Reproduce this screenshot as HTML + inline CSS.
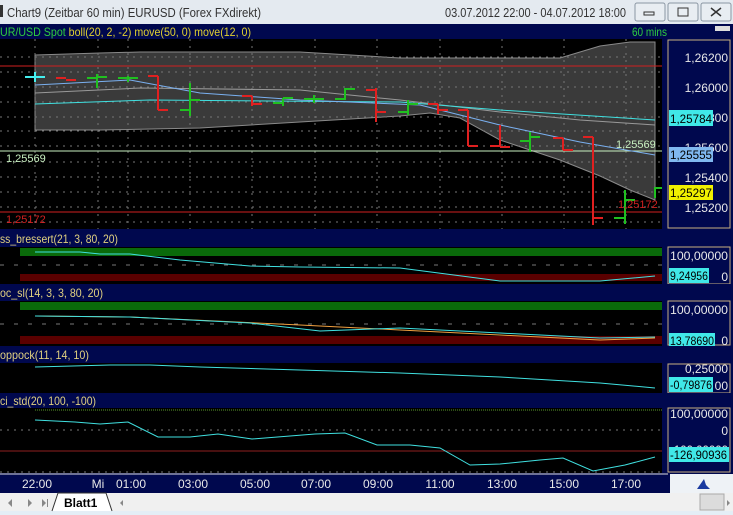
<!DOCTYPE html>
<html><head><meta charset="utf-8"><style>
body{margin:0;width:733px;height:515px;overflow:hidden;background:#000;font-family:"Liberation Sans",sans-serif}
svg{display:block}
text{font-family:"Liberation Sans",sans-serif}
</style></head><body>
<svg width="733" height="515" viewBox="0 0 733 515" xmlns="http://www.w3.org/2000/svg">
<rect x="0" y="0" width="733" height="24" fill="#e4eaf0"/>
<rect x="0" y="5" width="3" height="12" fill="#333"/>
<text x="7" y="17" font-size="13" fill="#333" textLength="254" lengthAdjust="spacingAndGlyphs">Chart9 (Zeitbar 60 min)  EURUSD (Forex FXdirekt)</text>
<text x="445" y="17" font-size="13" fill="#333" textLength="181" lengthAdjust="spacingAndGlyphs">03.07.2012 22:00 - 04.07.2012 18:00</text>
<g fill="#e8edf2" stroke="#8a96a3"><rect x="635" y="3" width="30" height="18" rx="2"/><rect x="668" y="3" width="30" height="18" rx="2"/><rect x="701" y="3" width="30" height="18" rx="2"/></g>
<rect x="644" y="12" width="10" height="3" fill="none" stroke="#333"/>
<rect x="678" y="8" width="10" height="8" fill="none" stroke="#333"/>
<path d="M711 8l10 8M721 8l-10 8" stroke="#333" stroke-width="1.5"/>
<rect x="0" y="24" width="733" height="15" fill="#00084e"/>
<text x="0" y="36" font-size="12" fill="#2ecc40" textLength="251" lengthAdjust="spacingAndGlyphs">UR/USD Spot <tspan fill="#e0d030">boll(20, 2, -2) move(50, 0) move(12, 0)</tspan></text>
<text x="632" y="36" font-size="12" fill="#2ecc40" textLength="35" lengthAdjust="spacingAndGlyphs">60 mins</text>
<rect x="715" y="26" width="15" height="5" fill="#ddd"/>
<rect x="0" y="39" width="662" height="190" fill="#000"/>
<path d="M35 55 L100 53 L140 52 L300 52 L400 58 L560 58 L600 46 L630 42 L655 42 L655 200 L630 190 L600 176 L560 160 L500 140 L460 118 L430 113 L400 116 L300 122 L200 128 L100 130 L35 130 Z" fill="#3a3a3a" stroke="#8a8a8a"/>
<g stroke="#777" stroke-dasharray="2,5" stroke-width="1">
<path d="M0 57H662M0 72H662M0 87H662M0 102H662M0 117H662M0 131H662M0 146H662M0 162H662M0 177H662M0 192H662M0 207H662M0 222H662"/>
<path d="M35 39V229M98 39V229M128 39V229M190 39V229M252 39V229M315 39V229M377 39V229M440 39V229M502 39V229M564 39V229M626 39V229"/>
</g>
<line x1="0" y1="66" x2="662" y2="66" stroke="#d02020"/>
<line x1="0" y1="151" x2="662" y2="151" stroke="#c8f0c0"/>
<line x1="0" y1="212" x2="662" y2="212" stroke="#d02020"/>
<polyline points="35,93 140,88 300,90 400,100 500,112 580,120 655,125" fill="none" stroke="#999"/>
<polyline points="35,104 150,100 400,102 500,110 655,120" fill="none" stroke="#40e0e0"/>
<polyline points="35,85 130,80 200,93 300,100 420,105 500,125 580,142 655,155" fill="none" stroke="#7ab0f0"/>
<g stroke-width="2" fill="none">
<path d="M25 77h20M35 72v10" stroke="#4ee"/>
<path d="M56 78h10M66 80h10" stroke="#e02020"/>
<path d="M87 78h10M97 74v14M97 77h10" stroke="#20c020"/>
<path d="M118 78h10M128 76v6M128 78h10" stroke="#20c020"/>
<path d="M148 76h10M158 76v34M158 110h10" stroke="#e02020"/>
<path d="M180 110h10M190 83v33M190 100h10" stroke="#20c020"/>
<path d="M242 96h10M252 96v10M252 104h10" stroke="#e02020"/>
<path d="M273 103h10M283 98v8M283 98h10" stroke="#20c020"/>
<path d="M304 99h10M314 95v8M314 99h10" stroke="#20c020"/>
<path d="M335 99h10M345 88v12M345 89h10" stroke="#20c020"/>
<path d="M366 90h10M376 88v34M376 112h10" stroke="#e02020"/>
<path d="M398 112h10M408 100v15M408 104h10" stroke="#20c020"/>
<path d="M428 104h10M438 104v10M438 110h10" stroke="#e02020"/>
<path d="M458 110h10M468 110v36M468 146h10" stroke="#e02020"/>
<path d="M490 146h10M500 125v22M500 147h10" stroke="#e02020"/>
<path d="M520 141h10M530 132v20M530 137h10" stroke="#20c020"/>
<path d="M553 138h10M563 138v12M563 150h10" stroke="#e02020"/>
<path d="M583 137h10M593 137v88M593 218h10" stroke="#e02020"/>
<path d="M614 218h10M625 190v34M625 200h10" stroke="#20c020"/>
<path d="M655 198v-10h8" stroke="#20c020"/>
</g>
<text x="6" y="162" font-size="11" fill="#c8f0c0">1,25569</text>
<text x="616" y="148" font-size="11" fill="#c8f0c0">1,25569</text>
<text x="6" y="223" font-size="11" fill="#d02020">1,25172</text>
<text x="618" y="208" font-size="11" fill="#d02020">1,25172</text>
<rect x="662" y="39" width="71" height="434" fill="#00084e"/>
<rect x="668" y="40" width="62" height="188" fill="none" stroke="#c8b080"/>
<g font-size="12" fill="#e8e8e8" text-anchor="end">
<text x="728" y="62">1,26200</text><text x="728" y="92">1,26000</text><text x="728" y="122">1,25800</text><text x="728" y="152">1,25600</text><text x="728" y="182">1,25400</text><text x="728" y="212">1,25200</text>
</g>
<g font-size="12" fill="#000">
<rect x="669" y="110" width="44" height="16" fill="#40e8e8"/><text x="670" y="123" textLength="42" lengthAdjust="spacingAndGlyphs">1,25784</text>
<rect x="669" y="147" width="44" height="15" fill="#80b8f0"/><text x="670" y="159" textLength="42" lengthAdjust="spacingAndGlyphs">1,25555</text>
<rect x="669" y="185" width="44" height="15" fill="#f0f000"/><text x="670" y="197" textLength="42" lengthAdjust="spacingAndGlyphs">1,25297</text>
</g>
<rect x="0" y="229" width="733" height="18" fill="#00084e"/>
<text x="0" y="243" font-size="12" fill="#e0d080" textLength="118" lengthAdjust="spacingAndGlyphs">ss_bressert(21, 3, 80, 20)</text>
<rect x="0" y="247" width="662" height="37" fill="#000"/>
<rect x="20" y="248" width="642" height="8" fill="#0a6a0a"/>
<rect x="20" y="274" width="642" height="7" fill="#5a0000"/>
<path d="M0 265H662" stroke="#777" stroke-dasharray="4,10"/>
<polyline points="35,252 80,252 100,254 130,254 180,260 250,266 300,267 400,268 500,281 600,281 655,276" fill="none" stroke="#40e0e0"/>
<rect x="668" y="247" width="62" height="37" fill="none" stroke="#c8b080"/>
<text x="728" y="260" font-size="12" fill="#e8e8e8" text-anchor="end" textLength="58" lengthAdjust="spacingAndGlyphs">100,00000</text>
<rect x="669" y="268" width="40" height="15" fill="#40e8e8"/><text x="670" y="280" font-size="12" fill="#000" textLength="38" lengthAdjust="spacingAndGlyphs">9,24956</text>
<text x="728" y="281" font-size="12" fill="#e8e8e8" text-anchor="end">0</text>
<rect x="0" y="284" width="733" height="17" fill="#00084e"/>
<text x="0" y="297" font-size="12" fill="#e0d080" textLength="103" lengthAdjust="spacingAndGlyphs">oc_sl(14, 3, 3, 80, 20)</text>
<rect x="0" y="301" width="662" height="45" fill="#000"/>
<rect x="20" y="302" width="642" height="8" fill="#0a6a0a"/>
<rect x="20" y="336" width="642" height="8" fill="#5a0000"/>
<path d="M0 324H662" stroke="#777" stroke-dasharray="4,10"/>
<polyline points="35,316 130,317 300,325 400,330 500,335 600,340 655,338" fill="none" stroke="#f0a040"/>
<polyline points="35,316 130,317 250,323 320,331 400,328 500,333 600,338 655,337" fill="none" stroke="#40e0e0"/>
<rect x="668" y="301" width="62" height="44" fill="none" stroke="#c8b080"/>
<text x="728" y="314" font-size="12" fill="#e8e8e8" text-anchor="end" textLength="58" lengthAdjust="spacingAndGlyphs">100,00000</text>
<rect x="669" y="333" width="46" height="15" fill="#40e8e8"/><text x="670" y="345" font-size="12" fill="#000" textLength="44" lengthAdjust="spacingAndGlyphs">13,78690</text>
<text x="728" y="345" font-size="12" fill="#e8e8e8" text-anchor="end">0</text>
<rect x="0" y="346" width="733" height="17" fill="#00084e"/>
<text x="0" y="359" font-size="12" fill="#e0d080" textLength="89" lengthAdjust="spacingAndGlyphs">oppock(11, 14, 10)</text>
<rect x="0" y="363" width="662" height="30" fill="#000"/>
<polyline points="35,367 110,365 150,365 200,367 300,370 400,373 500,377 600,383 655,388" fill="none" stroke="#40e0e0"/>
<rect x="668" y="364" width="62" height="29" fill="none" stroke="#c8b080"/>
<text x="728" y="373" font-size="12" fill="#e8e8e8" text-anchor="end" textLength="43" lengthAdjust="spacingAndGlyphs">0,25000</text>
<text x="728" y="390" font-size="12" fill="#e8e8e8" text-anchor="end">00</text>
<rect x="669" y="377" width="44" height="15" fill="#40e8e8"/><text x="670" y="389" font-size="12" fill="#000" textLength="42" lengthAdjust="spacingAndGlyphs">-0,79876</text>
<rect x="0" y="393" width="733" height="15" fill="#00084e"/>
<text x="0" y="405" font-size="12" fill="#e0d080" textLength="96" lengthAdjust="spacingAndGlyphs">ci_std(20, 100, -100)</text>
<rect x="0" y="408" width="662" height="65" fill="#000"/>
<line x1="35" y1="410" x2="662" y2="410" stroke="#5a9a2a" stroke-dasharray="1,1"/>
<line x1="0" y1="451" x2="662" y2="451" stroke="#902020"/>
<path d="M0 430H662M0 472H662" stroke="#777" stroke-dasharray="2,5"/>
<polyline points="35,420 75,422 100,424 128,422 158,437 190,437 218,434 252,439 290,436 315,434 345,433 377,445 410,445 440,448 470,465 500,464 540,460 563,458 593,471 625,465 655,457" fill="none" stroke="#40e0e0"/>
<rect x="668" y="408" width="62" height="64" fill="none" stroke="#c8b080"/>
<text x="728" y="418" font-size="12" fill="#e8e8e8" text-anchor="end" textLength="58" lengthAdjust="spacingAndGlyphs">100,00000</text>
<text x="728" y="435" font-size="12" fill="#e8e8e8" text-anchor="end">0</text>
<text x="728" y="454" font-size="12" fill="#e8e8e8" text-anchor="end" textLength="58" lengthAdjust="spacingAndGlyphs">-100,00000</text>
<rect x="669" y="447" width="60" height="15" fill="#40e8e8"/><text x="670" y="459" font-size="12" fill="#000" textLength="57" lengthAdjust="spacingAndGlyphs">-126,90936</text>
<rect x="0" y="473" width="733" height="20" fill="#00084e"/>
<line x1="0" y1="474" x2="668" y2="474" stroke="#ddd"/>
<rect x="670" y="474" width="63" height="19" fill="#eef2f6"/>
<path d="M697 489l7-10 2 6 4 4z" fill="#1a3aa0"/>
<g font-size="12" fill="#e8e8e8" text-anchor="middle">
<text x="37" y="488">22:00</text><text x="98" y="488">Mi</text><text x="131" y="488">01:00</text><text x="193" y="488">03:00</text><text x="255" y="488">05:00</text><text x="316" y="488">07:00</text><text x="378" y="488">09:00</text><text x="440" y="488">11:00</text><text x="502" y="488">13:00</text><text x="564" y="488">15:00</text><text x="626" y="488">17:00</text>
</g>
<rect x="0" y="493" width="733" height="22" fill="#f0f0f0"/>
<rect x="0" y="511" width="733" height="4" fill="#e4eef6"/>
<g fill="#888"><path d="M8 503l4-4v8z"/><path d="M28 499l4 4-4 4z"/><path d="M42 499l4 4-4 4z M47 499h1v8h-1z"/></g>
<path d="M52 511l6-18h48l6 18" fill="#fff" stroke="#333"/>
<text x="64" y="507" font-size="12" font-weight="bold" fill="#000">Blatt1</text>
<path d="M120 503l3-3v6z" fill="#888"/>
<rect x="700" y="494" width="24" height="16" fill="#dcdcdc" stroke="#aaa"/>
<path d="M727 500l3 3-3 3z" fill="#888"/>
</svg>
</body></html>
